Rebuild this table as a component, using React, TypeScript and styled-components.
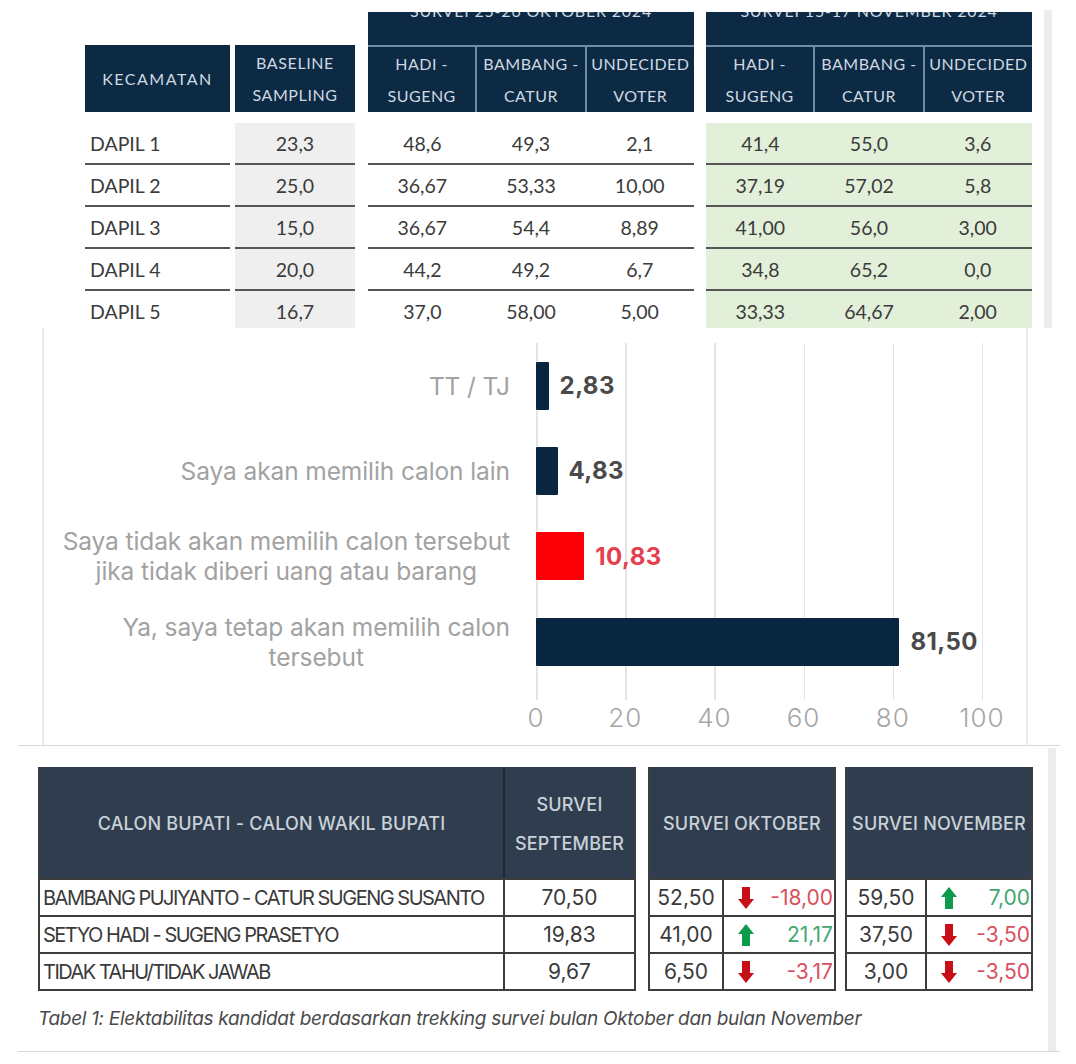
import React from "react";
import styled, { createGlobalStyle } from "styled-components";

const GlobalStyle = createGlobalStyle`
  html, body { margin: 0; padding: 0; background: #ffffff; }
  body { font-family: Lato, "Liberation Sans", sans-serif; }
  * { box-sizing: border-box; }
`;

const Page = styled.div`
  width: 1076px;
  height: 1064px;
  overflow: hidden;
  display: flex;
  flex-direction: column;
  background: #ffffff;
`;

/* ---------------- Top table ---------------- */

const NAVY = "#0c2a43";
const HEAD_TEXT = "#cfd8e1";
const HEAD_LINE = "#6e8ca3";

const TopPanel = styled.section`
  height: 328px;
  flex-shrink: 0;
  display: flex;
  overflow: hidden;
`;

const TopTable = styled.div`
  display: flex;
  align-items: flex-start;
  margin-left: 85px;
  padding-top: 10px;
`;

const TBlock = styled.div<{ $w: number; $ml: number }>`
  width: ${(p) => p.$w}px;
  margin-left: ${(p) => p.$ml}px;
  display: flex;
  flex-direction: column;
`;

const HeadSlot = styled.div`
  height: 102px;
  display: flex;
  flex-direction: column;
  justify-content: flex-end;
`;

const SingleHead = styled.div<{ $wide?: boolean }>`
  height: 67px;
  background: ${NAVY};
  color: ${HEAD_TEXT};
  display: flex;
  align-items: center;
  justify-content: center;
  text-align: center;
  font-size: 16px;
  line-height: 32px;
  letter-spacing: ${(p) => (p.$wide ? "1.5px" : "0.6px")};
`;

const GroupTitle = styled.div`
  height: 35px;
  overflow: hidden;
  background: ${NAVY};
  color: ${HEAD_TEXT};
  text-align: center;
  font-size: 16px;
  line-height: 18px;
  letter-spacing: 0.8px;
  border-bottom: 2px solid ${HEAD_LINE};
`;

const TitleText = styled.div`
  margin-top: -10px;
`;

const SubHeads = styled.div`
  display: flex;
  height: 65px;
  background: ${NAVY};
`;

const SubHead = styled.div`
  flex: 1;
  display: flex;
  align-items: center;
  justify-content: center;
  text-align: center;
  color: ${HEAD_TEXT};
  font-size: 16px;
  line-height: 32px;
  letter-spacing: 0.5px;
  white-space: nowrap;
  & + & {
    border-left: 2px solid ${HEAD_LINE};
  }
`;

const TBody = styled.div<{ $bg: string }>`
  margin-top: 11px;
  background: ${(p) => p.$bg};
`;

const TRow = styled.div`
  height: 42px;
  border-bottom: 2px solid #555555;
  display: flex;
  align-items: center;
`;

const TCell = styled.div<{ $left?: boolean }>`
  flex: 1;
  text-align: ${(p) => (p.$left ? "left" : "center")};
  padding-left: ${(p) => (p.$left ? "5px" : "0")};
  font-size: 19.5px;
  color: #3b3b3b;
`;

const TopStrip = styled.div`
  width: 8px;
  margin-left: 12px;
  margin-top: 10px;
  background: #ececec;
`;

const dapil = ["DAPIL 1", "DAPIL 2", "DAPIL 3", "DAPIL 4", "DAPIL 5"];
const baseline = ["23,3", "25,0", "15,0", "20,0", "16,7"];
const oktober = [
  ["48,6", "49,3", "2,1"],
  ["36,67", "53,33", "10,00"],
  ["36,67", "54,4", "8,89"],
  ["44,2", "49,2", "6,7"],
  ["37,0", "58,00", "5,00"],
];
const november = [
  ["41,4", "55,0", "3,6"],
  ["37,19", "57,02", "5,8"],
  ["41,00", "56,0", "3,00"],
  ["34,8", "65,2", "0,0"],
  ["33,33", "64,67", "2,00"],
];

const SubHeadRow = () => (
  <SubHeads>
    <SubHead>
      HADI -<br />
      SUGENG
    </SubHead>
    <SubHead>
      BAMBANG -<br />
      CATUR
    </SubHead>
    <SubHead>
      UNDECIDED
      <br />
      VOTER
    </SubHead>
  </SubHeads>
);

const GroupBlock = ({
  title,
  rows,
  bg,
  ml,
}: {
  title: string;
  rows: string[][];
  bg: string;
  ml: number;
}) => (
  <TBlock $w={326} $ml={ml}>
    <HeadSlot>
      <GroupTitle>
        <TitleText>{title}</TitleText>
      </GroupTitle>
      <SubHeadRow />
    </HeadSlot>
    <TBody $bg={bg}>
      {rows.map((r, i) => (
        <TRow key={i}>
          {r.map((v, j) => (
            <TCell key={j}>{v}</TCell>
          ))}
        </TRow>
      ))}
    </TBody>
  </TBlock>
);

const TopSection = () => (
  <TopPanel>
    <TopTable>
      <TBlock $w={145} $ml={0}>
        <HeadSlot>
          <SingleHead $wide>KECAMATAN</SingleHead>
        </HeadSlot>
        <TBody $bg="#ffffff">
          {dapil.map((d) => (
            <TRow key={d}>
              <TCell $left>{d}</TCell>
            </TRow>
          ))}
        </TBody>
      </TBlock>
      <TBlock $w={120} $ml={5}>
        <HeadSlot>
          <SingleHead>
            BASELINE
            <br />
            SAMPLING
          </SingleHead>
        </HeadSlot>
        <TBody $bg="#efefef">
          {baseline.map((b, i) => (
            <TRow key={i}>
              <TCell>{b}</TCell>
            </TRow>
          ))}
        </TBody>
      </TBlock>
      <GroupBlock title="SURVEI 25-26 OKTOBER 2024" rows={oktober} bg="#ffffff" ml={13} />
      <GroupBlock title="SURVEI 15-17 NOVEMBER 2024" rows={november} bg="#e2f0d9" ml={12} />
    </TopTable>
    <TopStrip />
  </TopPanel>
);

/* ---------------- Chart ---------------- */

const UNIT = 4.46;

const ChartPanel = styled.section`
  height: 417px;
  flex-shrink: 0;
  width: 986px;
  margin-left: 42px;
  border-left: 2px solid #e8e8e8;
  border-right: 2px solid #ececec;
  padding-top: 15px;
  font-family: Inter, "Liberation Sans", sans-serif;
`;

const ChartGrid = styled.div`
  display: grid;
  grid-template-columns: 466px 447px;
  grid-template-rows: repeat(4, 85.33px) 16px 36px;
  column-gap: 26px;
`;

const PlotBg = styled.div`
  grid-column: 2;
  grid-row: 1 / 6;
  background-image: repeating-linear-gradient(
    to right,
    #e4e4e4 0px,
    #e4e4e4 1.5px,
    transparent 1.5px,
    transparent 89.2px
  );
`;

const LabelCell = styled.div<{ $row: number }>`
  grid-column: 1;
  grid-row: ${(p) => p.$row};
  display: flex;
  align-items: center;
  justify-content: flex-end;
`;

const LabelText = styled.div`
  text-align: center;
  font-size: 24.5px;
  line-height: 30px;
  letter-spacing: -0.1px;
  color: #a2a2a2;
  white-space: nowrap;
`;

const BarCell = styled.div<{ $row: number }>`
  grid-column: 2;
  grid-row: ${(p) => p.$row};
  display: flex;
  align-items: center;
`;

const Bar = styled.div<{ $red?: boolean }>`
  height: 48px;
  background: ${(p) => (p.$red ? "#fb0007" : "#08263f")};
  border-radius: 1px;
`;

const BarValue = styled.span<{ $red?: boolean }>`
  margin-left: 11px;
  font-size: 24px;
  font-weight: 700;
  letter-spacing: 0.4px;
  color: ${(p) => (p.$red ? "#e4404e" : "#4a4a4a")};
`;

const AxisRow = styled.div`
  grid-column: 2;
  grid-row: 6;
  display: flex;
  margin-left: -44.6px;
`;

const Tick = styled.div`
  width: 89.2px;
  flex-shrink: 0;
  text-align: center;
  font-size: 26px;
  font-weight: 300;
  line-height: 36px;
  letter-spacing: 1px;
  color: #a6a6a6;
`;

const chartData = [
  { label: ["TT / TJ"], value: 2.83, text: "2,83" },
  { label: ["Saya akan memilih calon lain"], value: 4.83, text: "4,83" },
  {
    label: ["Saya tidak akan memilih calon tersebut", "jika tidak diberi uang atau barang"],
    value: 10.83,
    text: "10,83",
    red: true,
  },
  { label: ["Ya, saya tetap akan memilih calon", "tersebut"], value: 81.5, text: "81,50" },
];

const ChartSection = () => (
  <ChartPanel>
    <ChartGrid>
      <PlotBg />
      {chartData.map((d, i) => (
        <React.Fragment key={i}>
          <LabelCell $row={i + 1}>
            <LabelText>
              {d.label.map((l, j) => (
                <div key={j}>{l}</div>
              ))}
            </LabelText>
          </LabelCell>
          <BarCell $row={i + 1}>
            <Bar $red={d.red} style={{ width: `${d.value * UNIT}px` }} />
            <BarValue $red={d.red}>{d.text}</BarValue>
          </BarCell>
        </React.Fragment>
      ))}
      <AxisRow>
        {[0, 20, 40, 60, 80, 100].map((t) => (
          <Tick key={t}>{t}</Tick>
        ))}
      </AxisRow>
    </ChartGrid>
  </ChartPanel>
);

const Divider = styled.div`
  height: 1px;
  flex-shrink: 0;
  width: 1042px;
  margin-left: 18px;
  background: #d6d6d6;
`;

/* ---------------- Bottom table ---------------- */

const SLATE = "#2f3d4f";
const GRID_LINE = "#3d3d3d";

const BottomPanel = styled.section`
  height: 306px;
  flex-shrink: 0;
  width: 1042px;
  margin-left: 18px;
  border-bottom: 1px solid #d8d8d8;
  display: flex;
  font-family: Inter, "Liberation Sans", sans-serif;
`;

const BottomContent = styled.div`
  width: 995px;
  margin-left: 20px;
  padding-top: 21px;
  display: flex;
  flex-direction: column;
`;

const BottomTable = styled.div`
  display: flex;
  align-items: flex-start;
`;

const BBlock = styled.div<{ $cols: string; $ml: number }>`
  display: grid;
  grid-template-columns: ${(p) => p.$cols};
  grid-template-rows: 109px repeat(3, 37px);
  margin-left: ${(p) => p.$ml}px;
  border: 2px solid ${GRID_LINE};
  border-top-color: ${SLATE};
`;

const BHead = styled.div<{ $span?: boolean; $divider?: boolean }>`
  grid-column: ${(p) => (p.$span ? "1 / -1" : "auto")};
  background: ${SLATE};
  color: #c9d1d9;
  display: flex;
  align-items: center;
  justify-content: center;
  text-align: center;
  font-size: 18px;
  font-weight: 500;
  line-height: 39px;
  letter-spacing: 0.2px;
  white-space: nowrap;
  border-left: ${(p) => (p.$divider ? `2px solid #1d2733` : "none")};
`;

const BCell = styled.div<{ $first?: boolean; $name?: boolean }>`
  border-top: 2px solid ${GRID_LINE};
  border-left: ${(p) => (p.$first ? "none" : `2px solid ${GRID_LINE}`)};
  display: flex;
  align-items: center;
  justify-content: ${(p) => (p.$name ? "flex-start" : "center")};
  padding: 0 3px;
  font-size: ${(p) => (p.$name ? "20px" : "21px")};
  letter-spacing: ${(p) => (p.$name ? "-1.5px" : "0px")};
  color: #3a3a3a;
  white-space: nowrap;
  overflow: hidden;
`;

const ChangeCell = styled.div`
  border-top: 2px solid ${GRID_LINE};
  border-left: 2px solid ${GRID_LINE};
  display: flex;
  align-items: center;
  justify-content: space-between;
  padding: 0 1px 0 14px;
`;

const ChangeValue = styled.span<{ $up: boolean }>`
  font-size: 21px;
  letter-spacing: 0px;
  color: ${(p) => (p.$up ? "#43a86f" : "#d9505e")};
`;

const Caption = styled.div`
  margin-top: 16px;
  font-size: 19px;
  font-style: italic;
  letter-spacing: -0.3px;
  color: #4a4a4a;
  white-space: nowrap;
`;

const BottomStrip = styled.div`
  width: 8px;
  margin-left: 15px;
  margin-top: 2px;
  background: #ececec;
`;

const Arrow = ({ up }: { up: boolean }) =>
  up ? (
    <svg width="16" height="22" viewBox="0 0 16 22">
      <path d="M8 0 L16 10 H12 V22 H4 V10 H0 Z" fill="#0c9a4c" />
    </svg>
  ) : (
    <svg width="16" height="22" viewBox="0 0 16 22">
      <path d="M4 0 H12 V12 H16 L8 22 L0 12 H4 Z" fill="#c80f18" />
    </svg>
  );

const candidates = [
  { name: "BAMBANG PUJIYANTO - CATUR SUGENG SUSANTO", sep: "70,50" },
  { name: "SETYO HADI - SUGENG PRASETYO", sep: "19,83" },
  { name: "TIDAK TAHU/TIDAK JAWAB", sep: "9,67" },
];

const okt = [
  { v: "52,50", c: "-18,00", up: false },
  { v: "41,00", c: "21,17", up: true },
  { v: "6,50", c: "-3,17", up: false },
];

const nov = [
  { v: "59,50", c: "7,00", up: true },
  { v: "37,50", c: "-3,50", up: false },
  { v: "3,00", c: "-3,50", up: false },
];

const ChangeBlock = ({
  title,
  rows,
  cols,
  ml,
}: {
  title: string;
  rows: { v: string; c: string; up: boolean }[];
  cols: string;
  ml: number;
}) => (
  <BBlock $cols={cols} $ml={ml}>
    <BHead $span>{title}</BHead>
    {rows.map((r, i) => (
      <React.Fragment key={i}>
        <BCell $first>{r.v}</BCell>
        <ChangeCell>
          <Arrow up={r.up} />
          <ChangeValue $up={r.up}>{r.c}</ChangeValue>
        </ChangeCell>
      </React.Fragment>
    ))}
  </BBlock>
);

const BottomSection = () => (
  <BottomPanel>
    <BottomContent>
      <BottomTable>
        <BBlock $cols="463px 131px" $ml={0}>
          <BHead>CALON BUPATI - CALON WAKIL BUPATI</BHead>
          <BHead $divider>
            SURVEI
            <br />
            SEPTEMBER
          </BHead>
          {candidates.map((c) => (
            <React.Fragment key={c.name}>
              <BCell $first $name>
                {c.name}
              </BCell>
              <BCell>{c.sep}</BCell>
            </React.Fragment>
          ))}
        </BBlock>
        <ChangeBlock title="SURVEI OKTOBER" rows={okt} cols="72px 112px" ml={12} />
        <ChangeBlock title="SURVEI NOVEMBER" rows={nov} cols="78px 106px" ml={9} />
      </BottomTable>
      <Caption>
        Tabel 1: Elektabilitas kandidat berdasarkan trekking survei bulan Oktober dan bulan November
      </Caption>
    </BottomContent>
    <BottomStrip />
  </BottomPanel>
);

export default function App() {
  return (
    <>
      <GlobalStyle />
      <Page>
        <TopSection />
        <ChartSection />
        <Divider />
        <BottomSection />
      </Page>
    </>
  );
}
